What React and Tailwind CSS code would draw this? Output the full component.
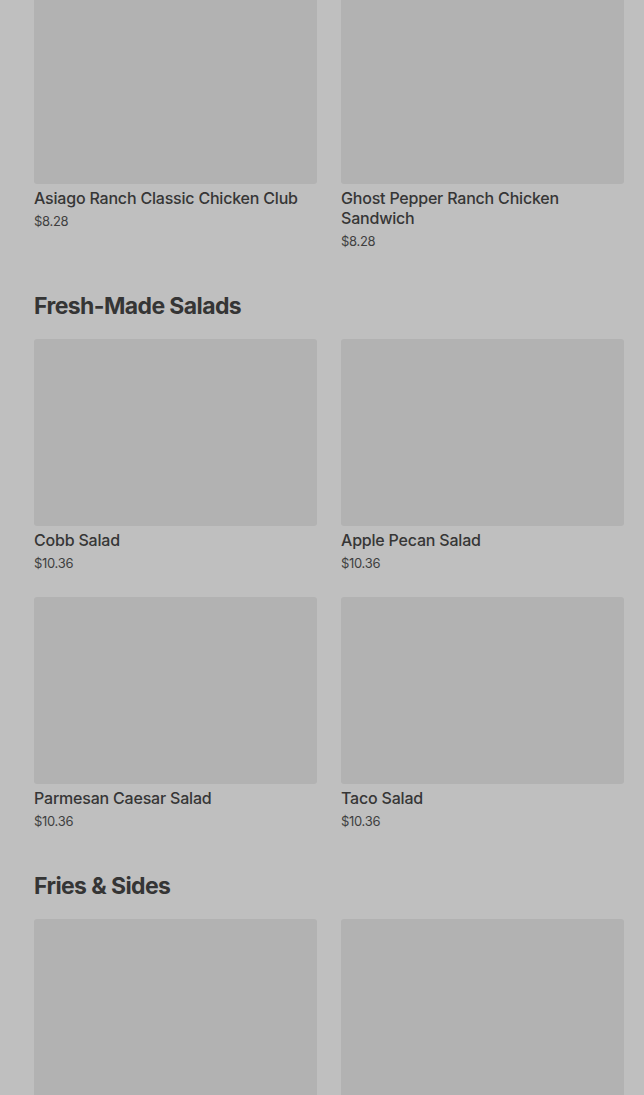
const sections = [
  {
    title: null,
    items: [
      { name: "Asiago Ranch Classic Chicken Club", price: "$8.28" },
      { name: "Ghost Pepper Ranch Chicken Sandwich", price: "$8.28" },
    ],
  },
  {
    title: "Fresh-Made Salads",
    items: [
      { name: "Cobb Salad", price: "$10.36" },
      { name: "Apple Pecan Salad", price: "$10.36" },
      { name: "Parmesan Caesar Salad", price: "$10.36" },
      { name: "Taco Salad", price: "$10.36" },
    ],
  },
  {
    title: "Fries & Sides",
    items: [
      { name: "", price: "" },
      { name: "", price: "" },
    ],
  },
];

function Card({ name, price }) {
  return (
    <div className="flex flex-col">
      <div className="h-[187px] w-full rounded-[3px] bg-[#b2b2b2]" />
      {name && (
        <div className="mt-[4px] text-[16px] leading-[20px] font-medium tracking-[-0.2px] text-[#363636] pr-2">{name}</div>
      )}
      {price && (
        <div className="mt-[4px] text-[13px] leading-[18px] tracking-[-0.3px] text-[#3f3f3f]">{price}</div>
      )}
    </div>
  );
}

export default function App() {
  return (
    <div
      className="h-[1095px] w-[644px] overflow-hidden bg-[#bfbfbf]"
      style={{ fontFamily: "Inter, 'Noto Sans', Arial, sans-serif" }}
    >
      <div className="-mt-[3px] pl-[34px] pr-[20px]">
        {sections.map((s, i) => (
          <div key={i}>
            {s.title && (
              <h2 className="mt-[40px] mb-[17px] h-[32px] text-[23px] leading-[32px] font-bold tracking-[-0.6px] text-[#353535]">
                {s.title}
              </h2>
            )}
            <div className="grid grid-cols-2 gap-x-[24px] gap-y-[25px]">
              {s.items.map((it, j) => (
                <Card key={j} {...it} />
              ))}
            </div>
          </div>
        ))}
      </div>
    </div>
  );
}
